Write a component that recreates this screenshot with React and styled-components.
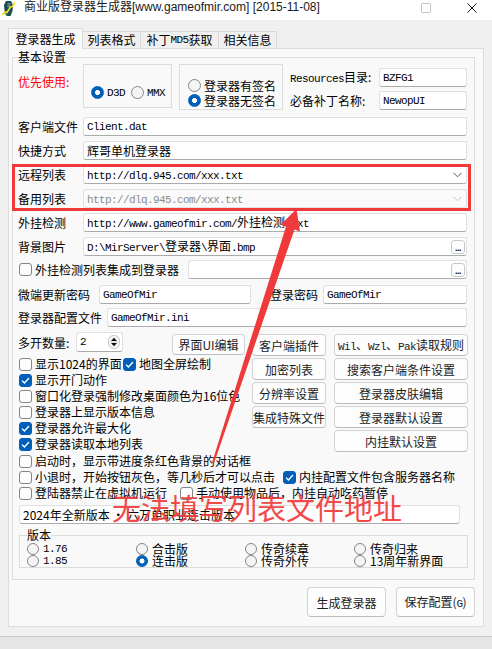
import React from 'react';
import styled, { createGlobalStyle } from 'styled-components';

const CJK = `"Noto Sans CJK SC", "Noto Sans", sans-serif`;

const GlobalStyle = createGlobalStyle`
  body {
    margin: 0;
    background: #e6e6e6;
    font-family: ${CJK};
    font-size: 12px;
    color: #000;
  }
`;

const Window = styled.div`
  position: relative;
  width: 492px;
  height: 637px;
  box-sizing: border-box;
  background: #f0f0f0;
  border-bottom: 1px solid #c6c6c6;
  overflow: hidden;
`;

const TitleBar = styled.div`
  height: 20px;
  background: #ffffff;
  display: flex;
  align-items: flex-start;
`;

const AppIcon = styled.svg`
  margin: 0 0 0 2px;
  flex: none;
`;

const Title = styled.div`
  margin-left: 9px;
  font: 12px/14px "Liberation Sans", ${CJK};
  color: #1a1a1a;
  white-space: nowrap;
`;

const Controls = styled.div`
  margin-left: auto;
  display: flex;
  gap: 36px;
  padding: 3px 15px 0 0;
`;

const TabStrip = styled.div`
  height: 28px;
  display: flex;
  align-items: flex-end;
  padding-left: 8px;
`;

const Tab = styled.div`
  position: relative;
  z-index: ${p => (p.$active ? 2 : 1)};
  box-sizing: border-box;
  width: ${p => p.$w}px;
  height: ${p => (p.$active ? 21 : 17)}px;
  margin-bottom: ${p => (p.$active ? -1 : 0)}px;
  margin-left: ${p => (p.$first ? 0 : -1)}px;
  border: 1px solid #d9d9d9;
  border-bottom: none;
  background: ${p => (p.$active ? '#f9f9f9' : '#f0f0f0')};
  display: flex;
  align-items: center;
  justify-content: center;
  font-size: 12px;
  line-height: 14px;
  white-space: nowrap;
`;

const Page = styled.div`
  box-sizing: border-box;
  height: 579px;
  margin: 0 8px;
  border: 1px solid #dcdcdc;
  background: #f9f9f9;
  padding: 1px 8px 0 3px;
  display: flex;
  flex-direction: column;
`;

const Group = styled.fieldset`
  margin: 0;
  padding: 0 7px 11px 5px;
  border: 1px solid #dcdcdc;
  min-width: 0;
`;

const Legend = styled.legend`
  padding: 0;
  font-size: 12px;
  line-height: ${p => p.$lh || 14}px;
`;

const Mono = styled.span`
  font-family: "Liberation Mono", "DejaVu Sans Mono", monospace;
  font-size: 11px;
  line-height: 14px;
  letter-spacing: -0.6px;
`;

const Cjk = styled.span`
  font-family: ${CJK};
  font-size: 12px;
  line-height: 14px;
  letter-spacing: 0;
`;

const TopRow = styled.div`
  display: flex;
  align-items: flex-start;
  height: 46px;
`;

const PriorityLabel = styled.span`
  flex: 0 0 65px;
  margin-top: 11px;
  line-height: 14px;
  color: #ff0000;
`;

const OptionBox = styled.div`
  box-sizing: border-box;
  flex: 0 0 ${p => p.$w}px;
  height: ${p => p.$h}px;
  margin-left: ${p => p.$ml || 0}px;
  padding: ${p => p.$pad};
  border: 1px solid #dcdcdc;
  display: flex;
  flex-direction: ${p => (p.$column ? 'column' : 'row')};
  align-items: flex-start;
  gap: ${p => (p.$column ? 0 : 6)}px;
`;

const RadioItem = styled.span`
  display: flex;
  align-items: center;
  gap: ${p => p.$gap || 3}px;
  height: ${p => p.$h || 15}px;
  line-height: 14px;
  white-space: nowrap;
`;

const Radio = styled.span`
  box-sizing: border-box;
  flex: none;
  width: ${p => p.$size || 13}px;
  height: ${p => p.$size || 13}px;
  border-radius: 50%;
  border: 1px solid ${p => (p.$checked ? '#005fb8' : '#858585')};
  background: ${p =>
    p.$checked
      ? 'radial-gradient(circle, #ffffff 0 2.2px, #005fb8 2.8px)'
      : '#f5f5f5'};
`;

const ResGrid = styled.div`
  margin-left: 7px;
  padding-top: 4px;
  display: grid;
  grid-template-columns: 89px 88px;
  grid-auto-rows: 19px;
  row-gap: 4px;
  align-items: center;
`;

const FieldRow = styled.div`
  display: flex;
  align-items: center;
  height: 19px;
  margin-top: ${p => p.$mt}px;
`;

const FieldLabel = styled.span`
  flex: 0 0 ${p => p.$w || 65}px;
  margin-left: ${p => p.$ml || 0}px;
  line-height: 14px;
  white-space: nowrap;
`;

const TextBox = styled.div`
  box-sizing: border-box;
  height: 19px;
  flex: ${p => (p.$w ? `0 0 ${p.$w}px` : '1 1 0')};
  margin-left: ${p => p.$ml || 0}px;
  min-width: 0;
  display: flex;
  align-items: center;
  padding: 0 1px 0 3px;
  background: ${p => (p.$disabled ? '#fafafa' : '#ffffff')};
  border: 1px solid #e0e0e0;
  border-bottom-color: ${p => (p.$disabled ? '#e3e3e3' : '#ababab')};
  border-radius: 3px;
  color: ${p => (p.$disabled ? '#8c8c8c' : '#000')};
  white-space: nowrap;
  overflow: hidden;
  line-height: 14px;
`;

const BoxText = styled.span`
  flex: 1;
  min-width: 0;
  line-height: 14px;
`;

const Chevron = styled.svg`
  flex: none;
  margin-right: 3px;
`;

const DotsButton = styled.span`
  box-sizing: border-box;
  flex: none;
  width: 14px;
  height: 14px;
  border: 1px solid #c8c8c8;
  border-radius: 3px;
  background: #fdfdfd;
  display: flex;
  align-items: flex-end;
  justify-content: center;
  font: bold 9px/9px "Liberation Sans", sans-serif;
  letter-spacing: -0.5px;
`;

const CheckRow = styled.div`
  display: flex;
  align-items: center;
  height: 16px;
  margin-top: ${p => p.$mt || 0}px;
`;

const CheckItem = styled.span`
  display: flex;
  align-items: center;
  gap: 3px;
  flex: ${p => (p.$w ? `0 0 ${p.$w}px` : '0 0 auto')};
  padding-left: 1px;
  box-sizing: border-box;
  line-height: 14px;
  white-space: nowrap;
`;

const CheckBox = styled.span`
  box-sizing: border-box;
  flex: none;
  width: 13px;
  height: 13px;
  border-radius: 3px;
  border: 1px solid ${p => (p.$checked ? '#005fb8' : '#858585')};
  background: ${p => (p.$checked ? '#005fb8' : '#fdfdfd')};
  display: flex;
  align-items: center;
  justify-content: center;
`;

const Lower = styled.div`
  display: flex;
  align-items: flex-start;
  margin-top: 5px;
`;

const LeftCol = styled.div`
  flex: 0 0 227px;
  display: flex;
  flex-direction: column;
`;

const SpinRow = styled.div`
  display: flex;
  align-items: flex-start;
  height: 24px;
`;

const SpinLabel = styled.span`
  flex: 0 0 58px;
  margin-top: 4px;
  line-height: 14px;
`;

const Spin = styled.div`
  box-sizing: border-box;
  width: 47px;
  height: 20px;
  border: 1px solid #e0e0e0;
  border-bottom-color: #ababab;
  border-radius: 3px;
  background: #fff;
  display: flex;
  align-items: center;
  justify-content: space-between;
  padding: 0 1px 0 3px;
`;

const ButtonCol = styled.div`
  flex: 0 0 ${p => p.$w}px;
  margin-left: ${p => p.$ml}px;
  padding-top: 2px;
  display: flex;
  flex-direction: column;
  gap: 2px;
`;

const Button = styled.button`
  box-sizing: border-box;
  flex: none;
  width: ${p => (p.$w ? `${p.$w}px` : '100%')};
  height: ${p => p.$h || 22}px;
  margin: ${p => p.$m || 0};
  padding: 0;
  border: 1px solid #d3d3d3;
  border-bottom-color: #bcbcbc;
  border-radius: 4px;
  background: #fdfdfd;
  font-family: ${CJK};
  font-size: 12px;
  color: #1b1b1b;
  white-space: nowrap;
`;

const NoticeBox = styled(TextBox)`
  margin: 4px 0 0 1px;
  width: 441px;
  flex: none;
`;

const VersionGroup = styled.fieldset`
  box-sizing: border-box;
  width: 449px;
  margin: 5px 0 0 1px;
  padding: 2px 0 0 7px;
  border: 1px solid #dcdcdc;
  min-width: 0;
`;

const VersionGrid = styled.div`
  display: grid;
  grid-template-columns: repeat(4, 109px);
  grid-auto-rows: 12px;
`;

const Footer = styled.div`
  display: flex;
  justify-content: flex-end;
  gap: 10px;
  margin-top: 7px;
`;

const RedFrame = styled.div`
  position: absolute;
  left: 12px;
  top: 164px;
  width: 459px;
  height: 47px;
  box-sizing: border-box;
  border: 3px solid #f0393b;
  pointer-events: none;
`;

const ArrowLayer = styled.svg`
  position: absolute;
  left: 0;
  top: 0;
  pointer-events: none;
`;

const Annotation = styled.div`
  position: absolute;
  left: 112px;
  top: 491px;
  font-family: ${CJK};
  font-size: 29px;
  line-height: 32px;
  color: #f23c3c;
  opacity: 0.93;
  white-space: nowrap;
  pointer-events: none;
`;

const Check = ({ checked }) => (
  <CheckBox $checked={checked}>
    {checked && (
      <svg width="9" height="7" viewBox="0 0 9 7">
        <polyline points="1,3.6 3.4,6 8,1" stroke="#fff" strokeWidth="1.3" fill="none" />
      </svg>
    )}
  </CheckBox>
);

const CheckField = ({ text, checked, w }) => (
  <CheckItem $w={w}>
    <Check checked={checked} />
    {text}
  </CheckItem>
);

const DownChevron = ({ color }) => (
  <Chevron width="9" height="6" viewBox="0 0 9 6">
    <polyline points="0.5,0.8 4.5,4.8 8.5,0.8" stroke={color} strokeWidth="1" fill="none" />
  </Chevron>
);

const leftChecks = [
  [{ text: '显示1024的界面', w: 104 }, { text: '地图全屏绘制', checked: true }],
  [{ text: '显示开门动作', checked: true }],
  [{ text: '窗口化登录强制修改桌面颜色为16位色' }],
  [{ text: '登录器上显示版本信息' }],
  [{ text: '登录器允许最大化', checked: true }],
  [{ text: '登录器读取本地列表', checked: true }],
];

const wideChecks = [
  [{ text: '启动时，显示带进度条红色背景的对话框' }],
  [{ text: '小退时，开始按钮灰色，等几秒后才可以点击', w: 264 }, { text: '内挂配置文件包含服务器名称', checked: true }],
  [{ text: '登陆器禁止在虚拟机运行', w: 161 }, { text: '手动使用物品后，内挂自动吃药暂停' }],
];

const versions = [
  { text: <Mono>1.76</Mono> },
  { text: '合击版' },
  { text: '传奇续章' },
  { text: '传奇归来' },
  { text: <Mono>1.85</Mono> },
  { text: '连击版', checked: true },
  { text: '传奇外传' },
  { text: '13周年新界面' },
];

export default function App() {
  return (
    <>
      <GlobalStyle />
      <Window>
        <TitleBar>
          <AppIcon width="13" height="17" viewBox="0 0 13 17">
            <path d="M4 1 L9 1 L11 5 L10.5 11 L8.5 16 L4.5 16 L2.5 11 L2 5 Z" fill="#1d4a57" />
            <path d="M5.5 3 L8.5 3 L8.5 7.5 L5.5 7.5 Z" fill="#3f9aa0" />
            <circle cx="7.5" cy="5" r="1" fill="#d8322a" />
            <path d="M0 15 L3 12 L5 12.5 L8.5 7 L10.5 6.5 L13 2" stroke="#f3e01d" strokeWidth="1.6" fill="none" />
            <path d="M3 13 L5 16" stroke="#58b04a" strokeWidth="1.2" />
          </AppIcon>
          <Title>商业版登录器生成器[www.gameofmir.com] [2015-11-08]</Title>
          <Controls>
            <svg width="10" height="10" viewBox="0 0 10 10">
              <rect x="0.5" y="0.5" width="9" height="9" rx="1" stroke="#c2c2c2" fill="none" />
            </svg>
            <svg width="10" height="10" viewBox="0 0 10 10">
              <path d="M0.5 0.5 L9.5 9.5 M9.5 0.5 L0.5 9.5" stroke="#1a1a1a" strokeWidth="1" />
            </svg>
          </Controls>
        </TitleBar>

        <TabStrip>
          <Tab $active $first $w={75}>登录器生成</Tab>
          <Tab $w={59}>列表格式</Tab>
          <Tab $w={79}>补丁<Mono>MD5</Mono>获取</Tab>
          <Tab $w={59}>相关信息</Tab>
        </TabStrip>

        <Page>
          <Group>
            <Legend>基本设置</Legend>

            <TopRow>
              <PriorityLabel>优先使用:</PriorityLabel>
              <OptionBox $w={89} $h={44} $pad="20px 0 0 7px">
                <RadioItem><Radio $checked /><Mono>D3D</Mono></RadioItem>
                <RadioItem><Radio /><Mono>MMX</Mono></RadioItem>
              </OptionBox>
              <OptionBox $w={104} $h={46} $ml={7} $pad="13px 0 0 8px" $column>
                <RadioItem><Radio />登录器有签名</RadioItem>
                <RadioItem><Radio $checked />登录器无签名</RadioItem>
              </OptionBox>
              <ResGrid>
                <FieldLabel><Mono>Resources</Mono>目录:</FieldLabel>
                <TextBox><Mono>BZFG1</Mono></TextBox>
                <FieldLabel>必备补丁名称:</FieldLabel>
                <TextBox><Mono>NewopUI</Mono></TextBox>
              </ResGrid>
            </TopRow>

            <FieldRow $mt={7}>
              <FieldLabel>客户端文件</FieldLabel>
              <TextBox><Mono>Client.dat</Mono></TextBox>
            </FieldRow>
            <FieldRow $mt={5}>
              <FieldLabel>快捷方式</FieldLabel>
              <TextBox>辉哥单机登录器</TextBox>
            </FieldRow>
            <FieldRow $mt={5}>
              <FieldLabel>远程列表</FieldLabel>
              <TextBox>
                <BoxText><Mono>http://dlq.945.com/xxx.txt</Mono></BoxText>
                <DownChevron color="#555" />
              </TextBox>
            </FieldRow>
            <FieldRow $mt={5}>
              <FieldLabel>备用列表</FieldLabel>
              <TextBox $disabled>
                <BoxText><Mono>http://dlq.945.com/xxx.txt</Mono></BoxText>
                <DownChevron color="#c4c4c4" />
              </TextBox>
            </FieldRow>
            <FieldRow $mt={5}>
              <FieldLabel>外挂检测</FieldLabel>
              <TextBox>
                <Mono>http://www.gameofmir.com/<Cjk>外挂检测</Cjk>.txt</Mono>
              </TextBox>
            </FieldRow>
            <FieldRow $mt={5}>
              <FieldLabel>背景图片</FieldLabel>
              <TextBox>
                <BoxText><Mono>D:\MirServer\<Cjk>登录器</Cjk>\<Cjk>界面</Cjk>.bmp</Mono></BoxText>
                <DotsButton>...</DotsButton>
              </TextBox>
            </FieldRow>
            <FieldRow $mt={4}>
              <CheckItem $w={170}>
                <Check />
                外挂检测列表集成到登录器
              </CheckItem>
              <TextBox>
                <BoxText />
                <DotsButton>...</DotsButton>
              </TextBox>
            </FieldRow>
            <FieldRow $mt={6}>
              <FieldLabel $w={81}>微端更新密码</FieldLabel>
              <TextBox $w={152}><Mono>GameOfMir</Mono></TextBox>
              <FieldLabel $w={53} $ml={19}>登录密码</FieldLabel>
              <TextBox><Mono>GameOfMir</Mono></TextBox>
            </FieldRow>
            <FieldRow $mt={4}>
              <FieldLabel $w={89}>登录器配置文件</FieldLabel>
              <TextBox><Mono>GameOfMir.ini</Mono></TextBox>
            </FieldRow>

            <Lower>
              <LeftCol>
                <SpinRow>
                  <SpinLabel>多开数量:</SpinLabel>
                  <Spin>
                    <Mono>2</Mono>
                    <svg width="14" height="14" viewBox="0 0 14 14">
                      <rect x="1.5" y="0.5" width="11" height="13" rx="5" fill="#f7f7f7" stroke="#c4c4c4" />
                      <path d="M4 6 L10 6 L7 2.8 Z" fill="#111" />
                      <path d="M4 8 L10 8 L7 11.2 Z" fill="#111" />
                      <line x1="3" y1="7" x2="11" y2="7" stroke="#bbb" strokeWidth="0.6" />
                    </svg>
                  </Spin>
                  <Button $w={73} $h={21} $m="2px 0 0 auto">界面UI编辑</Button>
                </SpinRow>
                {leftChecks.map((row, i) => (
                  <CheckRow key={i}>
                    {row.map(c => <CheckField key={c.text} {...c} />)}
                  </CheckRow>
                ))}
              </LeftCol>
              <ButtonCol $w={72} $ml={7}>
                <Button>客户端插件</Button>
                <Button>加密列表</Button>
                <Button>分辨率设置</Button>
                <Button>集成特殊文件</Button>
              </ButtonCol>
              <ButtonCol $w={134} $ml={8}>
                <Button><Mono>Wil</Mono>、<Mono>Wzl</Mono>、<Mono>Pak</Mono>读取规则</Button>
                <Button>搜索客户端条件设置</Button>
                <Button>登录器皮肤编辑</Button>
                <Button>登录器默认设置</Button>
                <Button>内挂默认设置</Button>
              </ButtonCol>
            </Lower>

            {wideChecks.map((row, i) => (
              <CheckRow key={i} $mt={i === 0 ? 1 : 0}>
                {row.map(c => <CheckField key={c.text} {...c} />)}
              </CheckRow>
            ))}

            <NoticeBox>2024年全新版本 · 六万单职业连击版本</NoticeBox>

            <VersionGroup>
              <Legend $lh={12}>版本</Legend>
              <VersionGrid>
                {versions.map((v, i) => (
                  <RadioItem key={i} $h={12} $gap={4}>
                    <Radio $size={12} $checked={v.checked} />
                    {v.text}
                  </RadioItem>
                ))}
              </VersionGrid>
            </VersionGroup>
          </Group>

          <Footer>
            <Button $w={79} $h={30}>生成登录器</Button>
            <Button $w={79} $h={30}>保存配置(<Mono>G</Mono>)</Button>
          </Footer>
        </Page>

        <RedFrame />
        <ArrowLayer width="492" height="637" viewBox="0 0 492 637">
          <polygon
            points="296.5,209 300,231.5 294.5,229.4 214,463.3 212,462.7 286,226.6 280.6,224.8"
            fill="#f0393b"
          />
        </ArrowLayer>
        <Annotation>无法填写列表文件地址</Annotation>
      </Window>
    </>
  );
}
